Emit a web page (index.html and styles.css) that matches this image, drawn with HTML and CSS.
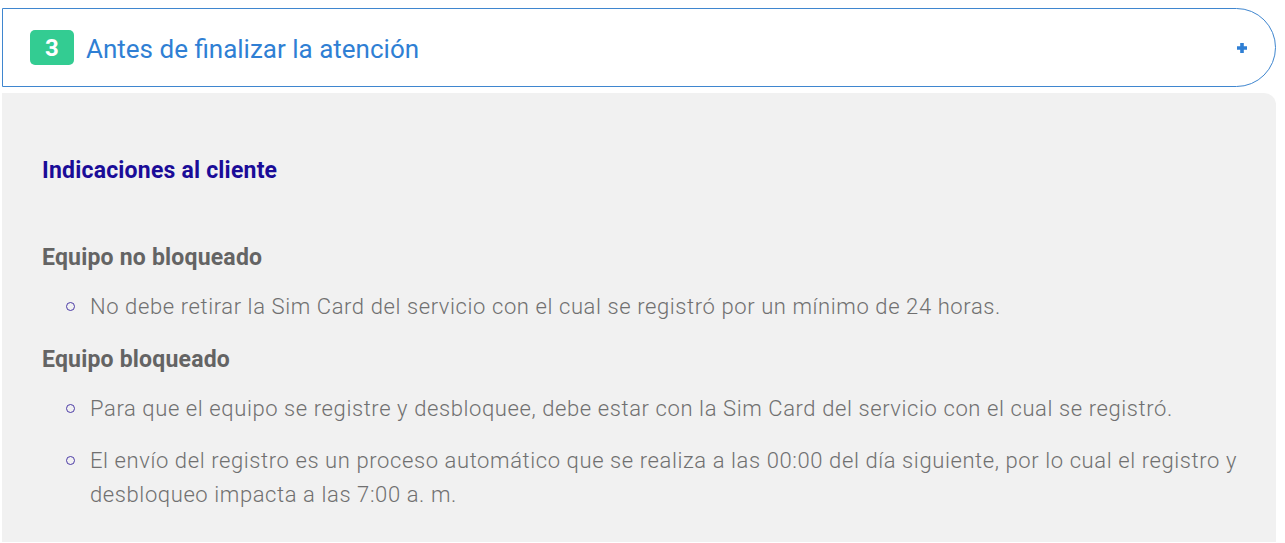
FILE: index.html
```html
<!DOCTYPE html>
<html lang="es">
<head>
<meta charset="utf-8">
<title>Antes de finalizar la atención</title>
<link rel="stylesheet" href="styles.css">
</head>
<body>
<div class="accordion">
  <div class="acc-header">
    <span class="badge">3</span>
    <span class="acc-title">Antes de finalizar la atención</span>
    <svg class="plus" width="12" height="12" viewBox="0 0 12 12" aria-hidden="true">
      <path d="M6 1v10M1 6h10" stroke="#2f7fd4" stroke-width="3.6" stroke-linecap="butt"/>
    </svg>
  </div>
  <div class="acc-body">
    <h3 class="section-title">Indicaciones al cliente</h3>
    <h4 class="sub-title first">Equipo no bloqueado</h4>
    <ul class="items">
      <li>No debe retirar la Sim Card del servicio con el cual se registró por un mínimo de 24 horas.</li>
    </ul>
    <h4 class="sub-title">Equipo bloqueado</h4>
    <ul class="items">
      <li>Para que el equipo se registre y desbloquee, debe estar con la Sim Card del servicio con el cual se registró.</li>
      <li>El envío del registro es un proceso automático que se realiza a las 00:00 del día siguiente, por lo cual el registro y desbloqueo impacta a las 7:00 a. m.</li>
    </ul>
  </div>
</div>
</body>
</html>
```
FILE: styles.css
```css
html, body {
  margin: 0;
  padding: 0;
  background: #ffffff;
}
body {
  font-family: Roboto, "Liberation Sans", sans-serif;
}
.accordion {
  margin: 8px 9px 0 2px;
}
.acc-header {
  height: 77px;
  border: 1px solid #3f86cf;
  border-radius: 0 40px 40px 0;
  display: flex;
  align-items: center;
  padding: 0 27px 0 27px;
}
.badge {
  width: 44px;
  height: 35px;
  border-radius: 5px;
  background: #33cc92;
  color: #ffffff;
  font-weight: 700;
  font-size: 24px;
  display: flex;
  align-items: center;
  justify-content: center;
}
.acc-title {
  margin-left: 12px;
  color: #2f7fd4;
  font-size: 26px;
  font-weight: 400;
  flex: 1;
  position: relative;
  top: 1px;
}
.acc-body {
  margin-top: 6px;
  background: #f1f1f1;
  border-radius: 0 12px 0 0;
  padding: 60px 30px 30px 40px;
}
.section-title {
  margin: 0;
  font-size: 23px;
  line-height: 34px;
  font-weight: 700;
  letter-spacing: 0.2px;
  color: #1a0c98;
  position: relative;
  top: 1px;
}
.sub-title {
  margin: 18px 0 16px 0;
  font-size: 23px;
  line-height: 34px;
  font-weight: 700;
  letter-spacing: 0.2px;
  color: #646464;
  position: relative;
  top: 1px;
}
.sub-title.first {
  margin-top: 53px;
}
.items {
  list-style: none;
  margin: 0;
  padding: 0 0 0 48px;
}
.items li {
  position: relative;
  font-size: 22px;
  line-height: 34px;
  font-weight: 300;
  letter-spacing: 0.6px;
  color: #707070;
}
.items li + li {
  margin-top: 18px;
}
.items li::before {
  content: "";
  position: absolute;
  left: -24px;
  top: 12px;
  width: 7px;
  height: 7px;
  border: 1.5px solid #4b3aa6;
  border-radius: 50%;
}
```
